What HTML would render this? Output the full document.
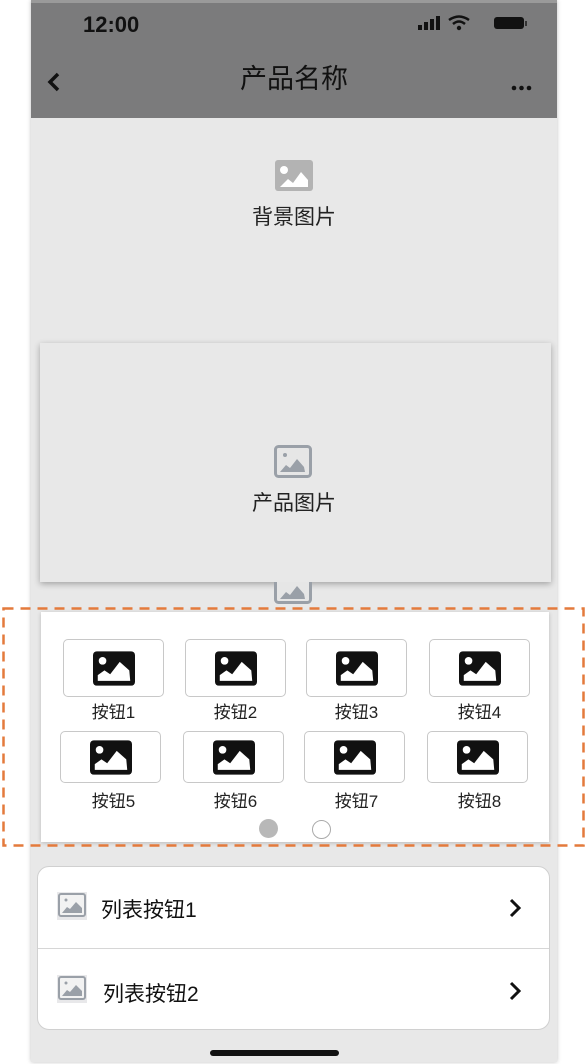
<!DOCTYPE html>
<html><head><meta charset="utf-8"><style>
*{margin:0;padding:0;box-sizing:border-box}
body{width:588px;height:1064px;background:#fff;position:relative;overflow:hidden;font-family:"Liberation Sans","Noto Sans CJK SC",sans-serif}
.a{position:absolute}
.phone{left:31px;top:0;width:526px;height:1062px;background:#e8e8e8;box-shadow:0 0 4px rgba(0,0,0,.25)}
.bar{left:31px;top:0;width:526px;height:118px;background:#7b7b7c;border-top:3px solid #9a9a9a}
.btn{width:101px;border:1px solid #c8c8c8;border-radius:5px;background:#fff;display:flex;align-items:center;justify-content:center}
.lbl{width:101px;text-align:center;font-size:17px;line-height:20px;color:#222}
</style></head><body>
<div class="a phone"></div>
<div class="a bar"></div>
<div class="a" style="left:83px;top:12px;font-size:22px;font-weight:bold;color:#111">12:00</div>
<svg class="a" style="left:418px;top:14px" width="120" height="22" viewBox="0 0 120 22">
<rect x="0" y="11" width="4" height="5" fill="#111"/><rect x="6" y="8" width="4" height="8" fill="#111"/><rect x="12" y="5" width="4" height="11" fill="#111"/><rect x="18" y="2" width="4" height="14" fill="#111"/>
<path d="M31 6 Q41 -1 51 6" stroke="#111" stroke-width="2.5" fill="none"/><path d="M35 10 Q41 5 47 10" stroke="#111" stroke-width="2.5" fill="none"/><circle cx="41" cy="14" r="2.2" fill="#111"/>
<rect x="76" y="3" width="30" height="12" rx="3" fill="#111"/><rect x="107" y="7" width="2" height="5" fill="#333"/>
</svg>
<svg class="a" style="left:46px;top:72px" width="16" height="20"><path d="M12 2 L4 10 L12 18" stroke="#111" stroke-width="3.5" fill="none"/></svg>
<div class="a" style="left:0;width:588px;top:57px;text-align:center;font-size:27px;color:#111">产品名称</div>
<div class="a" style="left:511px;top:78px"><svg width="22" height="6"><circle cx="3" cy="3" r="2.3" fill="#111"/><circle cx="10.5" cy="3" r="2.3" fill="#111"/><circle cx="18" cy="3" r="2.3" fill="#111"/></svg></div>

<svg class="a" style="left:275px;top:160px" width="38" height="31" viewBox="0 0 38 31"><rect width="38" height="31" rx="3" fill="#b3b3b3"/><circle cx="9" cy="10" r="4" fill="#fff"/><path d="M5 27 L13 19 L18 23 L26 12 L33 20 L33 27Z" fill="#fff"/></svg>
<div class="a" style="left:0;width:588px;top:201px;text-align:center;font-size:21px;color:#222">背景图片</div>

<div class="a" style="left:40px;top:343px;width:511px;height:239px;background:#e8e8e8;box-shadow:0 2px 6px rgba(0,0,0,.3)"></div>
<svg class="a" style="left:274px;top:445px" width="38" height="33" viewBox="0 0 38 33"><rect x="1.5" y="1.5" width="35" height="30" rx="3" fill="#e6e6e6" stroke="#9aa0a8" stroke-width="3"/><circle cx="11" cy="10" r="2" fill="#9aa0a8"/><path d="M6 27 L12 20 L16 23 L23 14 L30 22 L31 27Z" fill="#9aa0a8"/></svg>
<div class="a" style="left:0;width:588px;top:487px;text-align:center;font-size:21px;color:#222">产品图片</div>
<svg class="a" style="left:274px;top:582px" width="38" height="22" viewBox="0 0 38 22"><rect x="1.5" y="-5" width="35" height="25.5" rx="3" fill="#e6e6e6" stroke="#9aa0a8" stroke-width="3"/><path d="M6 17 L12 10 L16 13 L23 4 L30 12 L31 17Z" fill="#9aa0a8"/></svg>

<div class="a" style="left:41px;top:612px;width:508px;height:230px;background:#fff;box-shadow:0 1px 4px rgba(0,0,0,.2)"></div>
<svg class="a" style="left:0;top:605px" width="588" height="245"><rect x="3.5" y="3.5" width="580" height="237" fill="none" stroke="#e47a3c" stroke-width="2.5" stroke-dasharray="10 7"/></svg>

<!-- row1 -->
<div class="a btn" style="left:63px;top:639px;height:58px"><svg width="42" height="35" viewBox="0 0 44 36"><rect width="44" height="36" rx="4" fill="#111"/><circle cx="10" cy="10" r="4" fill="#fff"/><path d="M5 31 L5 25 L12 20 L18 24 L28 11 L38 20 L39 31Z" fill="#fff"/></svg></div>
<div class="a btn" style="left:185px;top:639px;height:58px"><svg width="42" height="35" viewBox="0 0 44 36"><rect width="44" height="36" rx="4" fill="#111"/><circle cx="10" cy="10" r="4" fill="#fff"/><path d="M5 31 L5 25 L12 20 L18 24 L28 11 L38 20 L39 31Z" fill="#fff"/></svg></div>
<div class="a btn" style="left:306px;top:639px;height:58px"><svg width="42" height="35" viewBox="0 0 44 36"><rect width="44" height="36" rx="4" fill="#111"/><circle cx="10" cy="10" r="4" fill="#fff"/><path d="M5 31 L5 25 L12 20 L18 24 L28 11 L38 20 L39 31Z" fill="#fff"/></svg></div>
<div class="a btn" style="left:429px;top:639px;height:58px"><svg width="42" height="35" viewBox="0 0 44 36"><rect width="44" height="36" rx="4" fill="#111"/><circle cx="10" cy="10" r="4" fill="#fff"/><path d="M5 31 L5 25 L12 20 L18 24 L28 11 L38 20 L39 31Z" fill="#fff"/></svg></div>
<div class="a lbl" style="left:63px;top:703px">按钮1</div>
<div class="a lbl" style="left:185px;top:703px">按钮2</div>
<div class="a lbl" style="left:306px;top:703px">按钮3</div>
<div class="a lbl" style="left:429px;top:703px">按钮4</div>
<!-- row2 -->
<div class="a btn" style="left:60px;top:731px;height:52px"><svg width="42" height="35" viewBox="0 0 44 36"><rect width="44" height="36" rx="4" fill="#111"/><circle cx="10" cy="10" r="4" fill="#fff"/><path d="M5 31 L5 25 L12 20 L18 24 L28 11 L38 20 L39 31Z" fill="#fff"/></svg></div>
<div class="a btn" style="left:183px;top:731px;height:52px"><svg width="42" height="35" viewBox="0 0 44 36"><rect width="44" height="36" rx="4" fill="#111"/><circle cx="10" cy="10" r="4" fill="#fff"/><path d="M5 31 L5 25 L12 20 L18 24 L28 11 L38 20 L39 31Z" fill="#fff"/></svg></div>
<div class="a btn" style="left:304px;top:731px;height:52px"><svg width="42" height="35" viewBox="0 0 44 36"><rect width="44" height="36" rx="4" fill="#111"/><circle cx="10" cy="10" r="4" fill="#fff"/><path d="M5 31 L5 25 L12 20 L18 24 L28 11 L38 20 L39 31Z" fill="#fff"/></svg></div>
<div class="a btn" style="left:427px;top:731px;height:52px"><svg width="42" height="35" viewBox="0 0 44 36"><rect width="44" height="36" rx="4" fill="#111"/><circle cx="10" cy="10" r="4" fill="#fff"/><path d="M5 31 L5 25 L12 20 L18 24 L28 11 L38 20 L39 31Z" fill="#fff"/></svg></div>
<div class="a lbl" style="left:63px;top:792px">按钮5</div>
<div class="a lbl" style="left:185px;top:792px">按钮6</div>
<div class="a lbl" style="left:306px;top:792px">按钮7</div>
<div class="a lbl" style="left:429px;top:792px">按钮8</div>
<div class="a" style="left:259px;top:819px;width:19px;height:19px;border-radius:50%;background:#b8b8b8"></div>
<div class="a" style="left:312px;top:820px;width:19px;height:19px;border-radius:50%;border:1.5px solid #aaa;background:#fff"></div>

<div class="a" style="left:37px;top:866px;width:513px;height:164px;background:#fff;border:1px solid #d0d0d0;border-radius:12px"></div>
<div class="a" style="left:38px;top:948px;width:511px;height:1px;background:#d6d6d6"></div>
<svg class="a" style="left:57px;top:892px" width="30" height="28" viewBox="0 0 30 28"><rect width="30" height="28" fill="#e8e8ea"/><rect x="2" y="2" width="26" height="22" rx="2" fill="#f2f2f2" stroke="#9aa0a8" stroke-width="2"/><circle cx="9" cy="8" r="1.5" fill="#9aa0a8"/><path d="M5 21 L10 15 L13 17 L19 10 L25 16 L25 21Z" fill="#9aa0a8"/></svg>
<div class="a" style="left:101px;top:894px;font-size:21px;color:#111">列表按钮1</div>
<svg class="a" style="left:508px;top:897px" width="14" height="22"><path d="M3 3 L11 11 L3 19" stroke="#111" stroke-width="3" fill="none"/></svg>
<svg class="a" style="left:57px;top:975px" width="30" height="28" viewBox="0 0 30 28"><rect width="30" height="28" fill="#e8e8ea"/><rect x="2" y="2" width="26" height="22" rx="2" fill="#f2f2f2" stroke="#9aa0a8" stroke-width="2"/><circle cx="9" cy="8" r="1.5" fill="#9aa0a8"/><path d="M5 21 L10 15 L13 17 L19 10 L25 16 L25 21Z" fill="#9aa0a8"/></svg>
<div class="a" style="left:103px;top:978px;font-size:21px;color:#111">列表按钮2</div>
<svg class="a" style="left:508px;top:980px" width="14" height="22"><path d="M3 3 L11 11 L3 19" stroke="#111" stroke-width="3" fill="none"/></svg>
<div class="a" style="left:210px;top:1050px;width:129px;height:6px;border-radius:3px;background:#111"></div>
</body></html>
